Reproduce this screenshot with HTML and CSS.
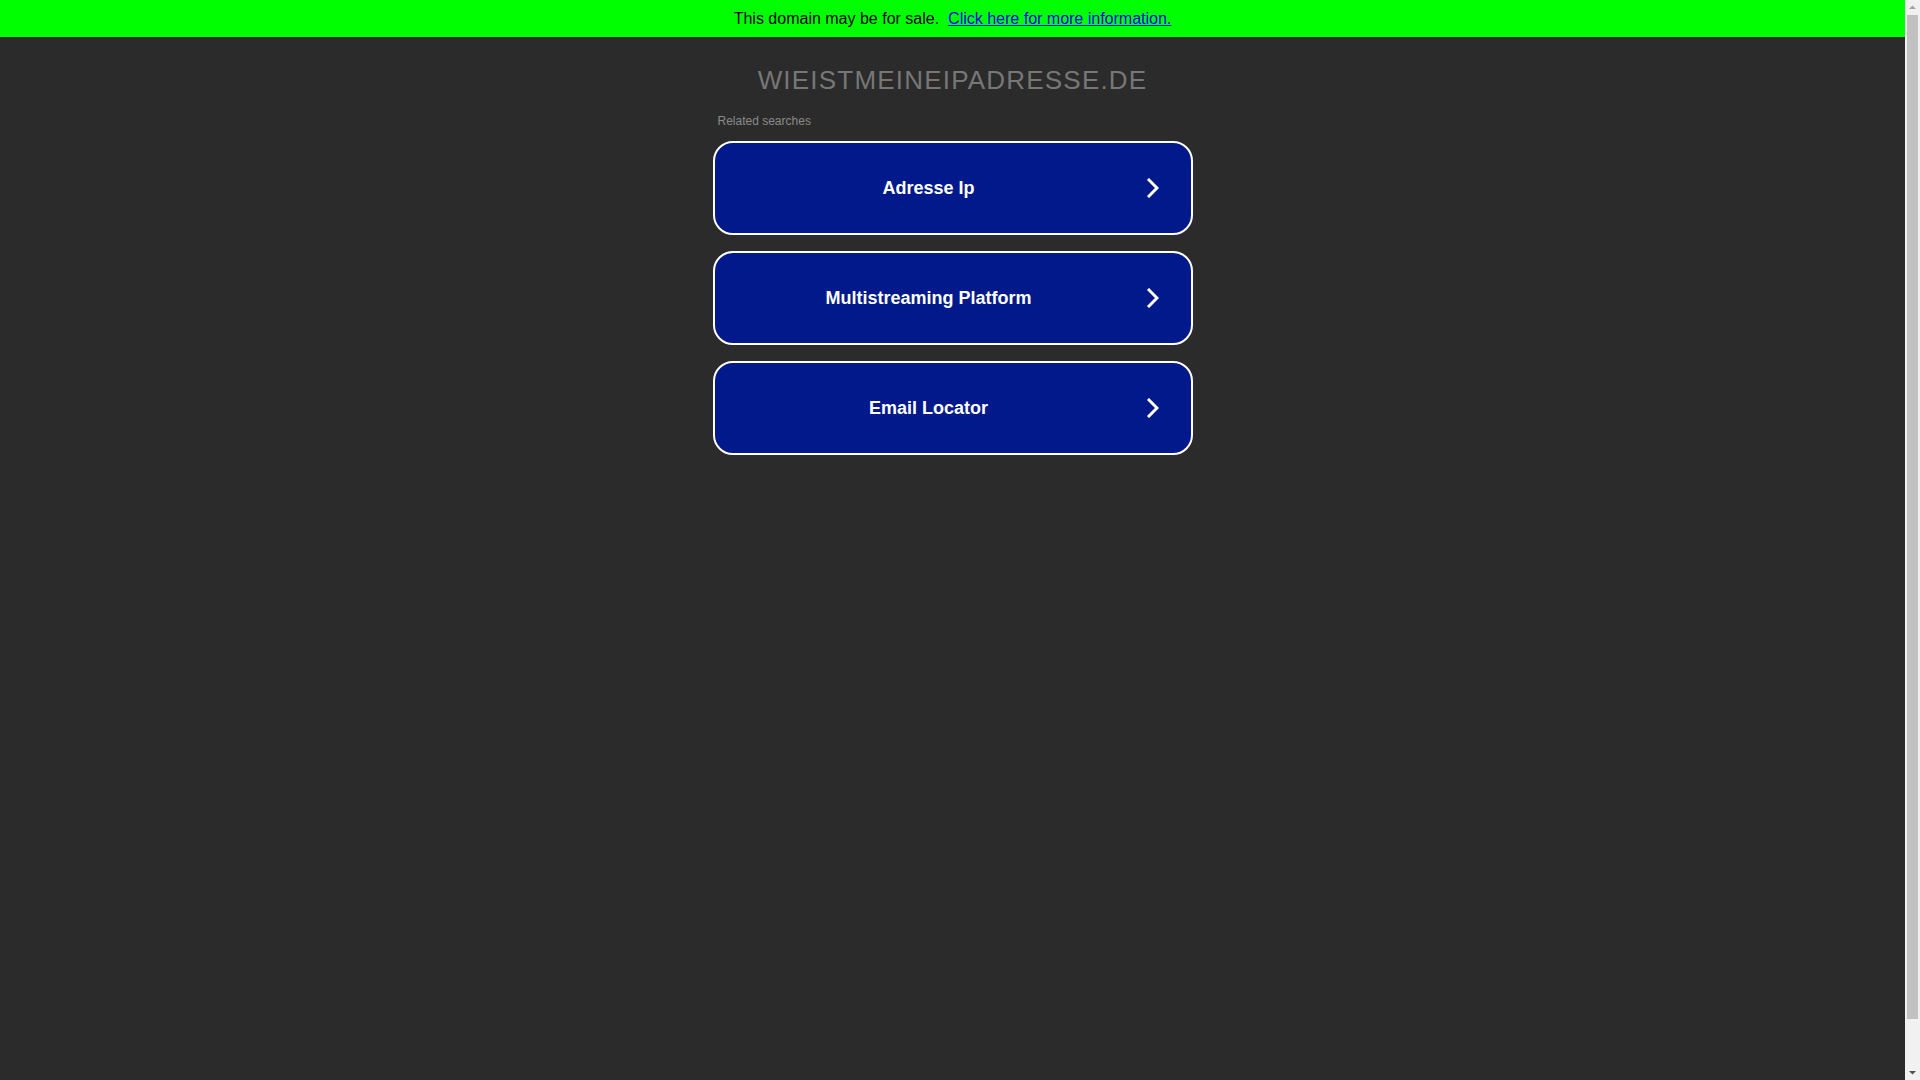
FILE: index.html
```html
<!DOCTYPE html>
<html lang="de">
<head>
<meta charset="utf-8">
<title>wieistmeineipadresse.de</title>
<link rel="stylesheet" href="styles.css">
</head>
<body>
<div class="page">
  <div class="banner">
    <span class="sale">This domain may be for sale.</span>
    <a class="sale-link" href="#">Click here for more information.</a>
  </div>
  <main class="content">
    <h1 class="domain">WIEISTMEINEIPADRESSE.DE</h1>
    <div class="related">
      <div class="related-title">Related searches</div>
      <a class="card" href="#">
        <span class="card-text">Adresse Ip</span>
        <svg class="chev" viewBox="0 0 12 20" width="12" height="20"><path d="M2 2 L10 10 L2 18" fill="none" stroke="#fff" stroke-width="3" stroke-linecap="square" stroke-linejoin="miter"/></svg>
      </a>
      <a class="card" href="#">
        <span class="card-text">Multistreaming Platform</span>
        <svg class="chev" viewBox="0 0 12 20" width="12" height="20"><path d="M2 2 L10 10 L2 18" fill="none" stroke="#fff" stroke-width="3" stroke-linecap="square" stroke-linejoin="miter"/></svg>
      </a>
      <a class="card" href="#">
        <span class="card-text">Email Locator</span>
        <svg class="chev" viewBox="0 0 12 20" width="12" height="20"><path d="M2 2 L10 10 L2 18" fill="none" stroke="#fff" stroke-width="3" stroke-linecap="square" stroke-linejoin="miter"/></svg>
      </a>
    </div>
  </main>
</div>
<div class="scrollbar" aria-hidden="true">
  <svg class="sb-arrow" viewBox="0 0 15 15" width="15" height="15"><path d="M4 9 L11 9 L7.5 5.5 Z" fill="#a3a3a3"/></svg>
  <div class="sb-track"><div class="sb-thumb"></div></div>
  <svg class="sb-arrow" viewBox="0 0 15 15" width="15" height="15"><path d="M4 6 L11 6 L7.5 9.5 Z" fill="#505050"/></svg>
</div>
</body>
</html>
```

FILE: styles.css
```css
html, body {
  margin: 0;
  padding: 0;
  background: #2b2b2b;
  font-family: "Liberation Sans", Arial, sans-serif;
}
body {
  display: flex;
  align-items: flex-start;
  overflow: hidden;
  height: 100vh;
}
.page {
  flex: 1;
  min-height: 1130px;
}
.banner {
  background: #00ff00;
  height: 37px;
  display: flex;
  align-items: center;
  justify-content: center;
  gap: 9px;
  font-size: 16px;
  color: #000;
}
.sale-link {
  color: #0000ee;
  text-decoration: underline;
}
.content {
  display: flex;
  flex-direction: column;
  align-items: center;
}
.domain {
  margin: 27px 0 0 0;
  font-size: 26px;
  font-weight: normal;
  letter-spacing: 1.2px;
  color: #777;
  line-height: 32px;
}
.related {
  width: 480px;
  display: flex;
  flex-direction: column;
  gap: 16px;
  margin-top: 18px;
}
.related-title {
  font-size: 12px;
  color: #8a8a8a;
  padding-left: 5px;
  line-height: 14px;
  margin-bottom: -3px;
}
.card {
  box-sizing: border-box;
  height: 94px;
  border: 2px solid #fff;
  border-radius: 20px;
  background: #01198a;
  display: flex;
  align-items: center;
  text-decoration: none;
  color: #fff;
  position: relative;
}
.card-text {
  flex: 1;
  text-align: center;
  font-size: 18px;
  font-weight: bold;
  padding-right: 48px;
}
.chev {
  position: absolute;
  right: 32px;
  top: 50%;
  margin-top: -10px;
}
.scrollbar {
  width: 15px;
  height: 100vh;
  background: #f1f1f1;
  display: flex;
  flex-direction: column;
  flex-shrink: 0;
}
.sb-arrow {
  display: block;
  flex-shrink: 0;
}
.sb-track {
  flex: 1;
  padding: 0 2px;
}
.sb-thumb {
  height: 1004px;
  background: #c1c1c1;
}
```
